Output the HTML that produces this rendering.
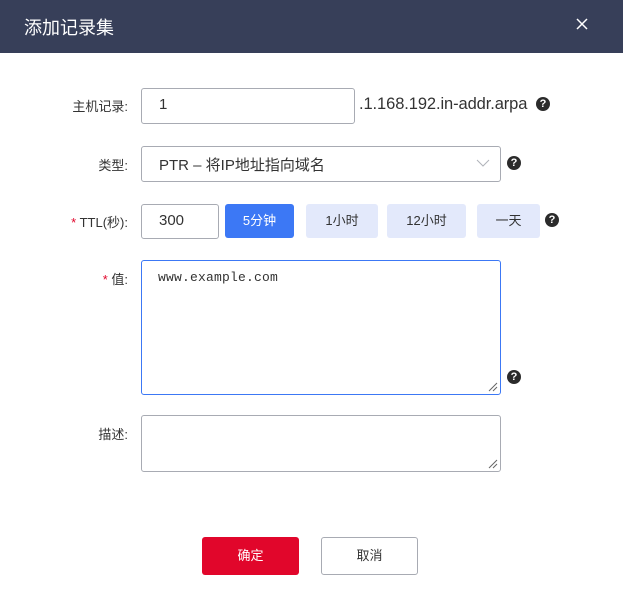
<!DOCTYPE html>
<html><head><meta charset="utf-8"><style>
*{box-sizing:border-box;margin:0;padding:0}
body{width:623px;height:610px;background:#fff;position:relative;font-family:"Liberation Sans","Noto Sans CJK SC",sans-serif;color:#333;overflow:hidden}
.a{position:absolute}
.hdr{left:0;top:0;width:623px;height:53px;background:#373f59}
.lbl{font-size:13px;color:#333;text-align:right;width:120px;left:8px}
.box{border:1px solid #a8abb3;border-radius:3px;background:#fff}
.q{width:14px;height:14px;border-radius:50%;background:#2b2b2b;color:#fff;font-size:11px;font-weight:bold;text-align:center;line-height:14px}
.btn{border-radius:3px;font-size:13px;text-align:center;line-height:34px;background:#e3e9fb;color:#333}
.star{color:#e1062b}
</style></head><body>
<div class="a hdr"></div>
<div class="a" style="left:24px;top:14px;font-size:18px;color:#fff">添加记录集</div>
<svg class="a" style="left:576px;top:18px" width="12" height="12"><path d="M1 1L11 11M11 1L1 11" stroke="#fff" stroke-width="1.5"/></svg>

<div class="a lbl" style="top:96px">主机记录:</div>
<div class="a box" style="left:141px;top:88px;width:214px;height:36px"></div>
<div class="a" style="left:159px;top:96px;font-size:15px">1</div>
<div class="a" style="left:359px;top:95px;font-size:16.5px;letter-spacing:-0.1px;color:#333">.1.168.192.in-addr.arpa</div>
<div class="a q" style="left:536px;top:97px">?</div>

<div class="a lbl" style="top:155px">类型:</div>
<div class="a box" style="left:141px;top:146px;width:360px;height:36px"></div>
<div class="a" style="left:159px;top:154px;font-size:15px">PTR – 将IP地址指向域名</div>
<svg class="a" style="left:476px;top:159px" width="14" height="8"><path d="M1 1L7 7L13 1" stroke="#b0b3ba" fill="none"/></svg>
<div class="a q" style="left:507px;top:156px">?</div>

<div class="a lbl" style="top:212px"><span class="star">*</span> TTL(秒):</div>
<div class="a box" style="left:141px;top:204px;width:78px;height:35px"></div>
<div class="a" style="left:159px;top:212px;font-size:15px">300</div>
<div class="a btn" style="left:225px;top:204px;width:69px;background:#3c78f5;color:#fff">5分钟</div>
<div class="a btn" style="left:306px;top:204px;width:72px">1小时</div>
<div class="a btn" style="left:387px;top:204px;width:79px">12小时</div>
<div class="a btn" style="left:477px;top:204px;width:63px">一天</div>
<div class="a q" style="left:545px;top:213px">?</div>

<div class="a lbl" style="top:269px"><span class="star">*</span> 值:</div>
<div class="a" style="left:141px;top:260px;width:360px;height:135px;border:1px solid #3c78f5;border-radius:3px"></div>
<div class="a" style="left:158px;top:270px;font-family:'Liberation Mono',monospace;font-size:13px;letter-spacing:0.2px;color:#333">www.example.com</div>
<svg class="a" style="left:488px;top:382px" width="10" height="10"><path d="M1 9L9 1M5 9L9 5" stroke="#666"/></svg>
<div class="a q" style="left:507px;top:370px">?</div>

<div class="a lbl" style="top:424px">描述:</div>
<div class="a box" style="left:141px;top:415px;width:360px;height:57px"></div>
<svg class="a" style="left:488px;top:459px" width="10" height="10"><path d="M1 9L9 1M5 9L9 5" stroke="#666"/></svg>

<div class="a" style="left:202px;top:537px;width:97px;height:38px;background:#e1062b;border-radius:3px;color:#fff;font-size:13px;text-align:center;line-height:38px">确定</div>
<div class="a box" style="left:321px;top:537px;width:97px;height:38px;font-size:13px;text-align:center;line-height:36px">取消</div>
</body></html>
